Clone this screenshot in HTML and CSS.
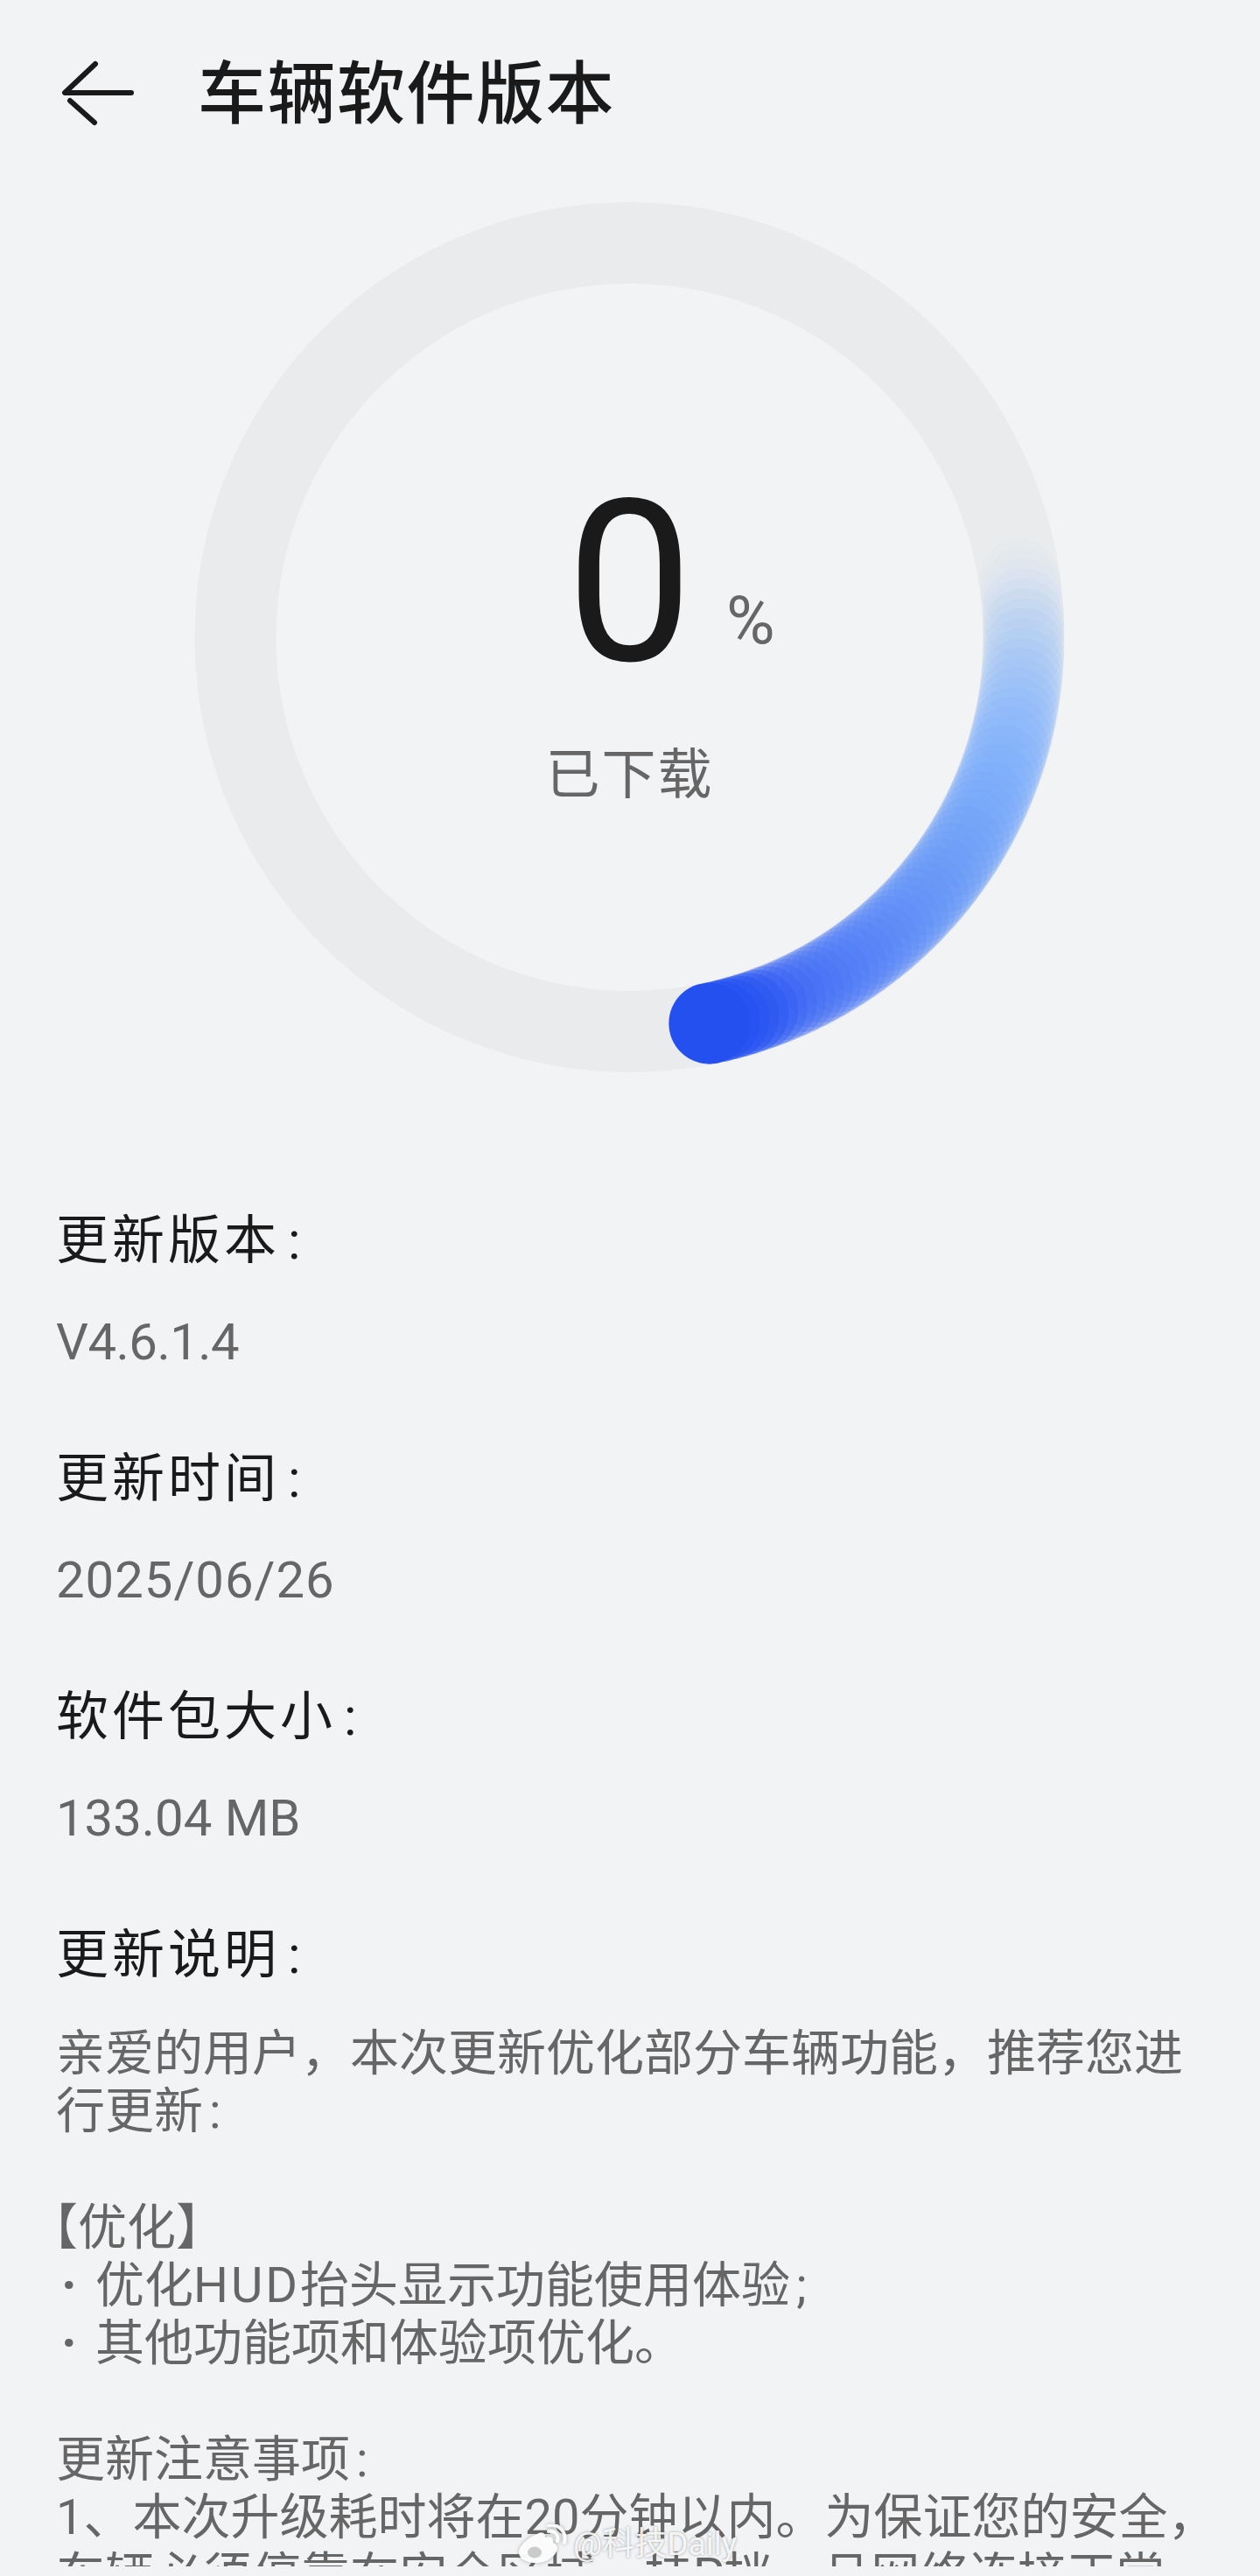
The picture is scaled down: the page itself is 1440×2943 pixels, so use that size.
FILE: index.html
```html
<!DOCTYPE html>
<html lang="zh-CN">
<head>
	<meta charset="UTF-8">
	<title>车辆软件版本</title>
	<link rel="stylesheet" href="styles.css">
</head>
<body>
	<div class="page">
		<div class="header">
			<svg class="back" viewBox="0 0 84 76" fill="none">
				<path class="back-line" d="M39 5 L4 38 H80"/>
				<path class="back-line" d="M10 47 L38 72"/>
			</svg>
			<div class="title">车辆软件版本</div>
		</div>

		<div class="dial">
			<svg class="ring" id="ring" viewBox="0 0 994 994">
				<circle class="track" cx="497" cy="497" r="450.5"/>
			</svg>
			<div class="dial-text">
				<div class="count">
					<span></span>
					<span class="num">0</span>
					<span class="unit">%</span>
				</div>
				<div class="status">已下载</div>
			</div>
		</div>

		<div class="info">
			<div class="item">
				<div class="label">更新版本<span class="colon">:</span></div>
				<div class="value version">V4.6.1.4</div>
			</div>
			<div class="item">
				<div class="label">更新时间<span class="colon">:</span></div>
				<div class="value date">2025/06/26</div>
			</div>
			<div class="item">
				<div class="label">软件包大小<span class="colon">:</span></div>
				<div class="value">133.04 MB</div>
			</div>
			<div class="item">
				<div class="label">更新说明<span class="colon">:</span></div>
				<div class="notes">
					<p>亲爱的用户，本次更新优化部分车辆功能，推荐您进行更新<span class="colon-sm">:</span></p>
					<p><span class="bracket">【</span>优化】<br>
					<span class="dot">·</span>优化<span class="latin">HUD</span>抬头显示功能使用体验<span class="colon-sm">;</span><br>
					<span class="dot">·</span>其他功能项和体验项优化。</p>
					<p>更新注意事项<span class="colon-sm">:</span><br>
					1、本次升级耗时将在20分钟以内。为保证您的安全，车辆必须停靠在安全区域，挂P挡，且网络连接正常。</p>
				</div>
			</div>
		</div>
	</div>

	<div class="mark">
		<svg class="mark-logo" viewBox="0 0 56 46" fill="none">
			<path class="mark-body" d="M22 11 C27 8 32 10 31 15 C37 13 41 16 40 21 C45 23 46 27 44 31 C40 40 28 45 17 44 C7 43 1 38 1 32 C1 24 13 14 22 11 Z"/>
			<ellipse class="mark-eye" cx="19" cy="32" rx="8" ry="6.5"/>
			<path class="mark-arc" d="M35 8 C42 7 47 12 45 19"/>
			<path class="mark-arc" d="M35 1 C47 -1 56 9 53 21"/>
		</svg>
		<span>@科技Daily</span>
	</div>

	<script src="script.js"></script>
</body>
</html>
```

FILE: styles.css
```css
*{
	margin:0;
	padding:0;
	box-sizing:border-box;
}
html,body{
	height:2943px;
	overflow:hidden;
	background:#f1f3f5;
}
body{
	position:relative;
	font-family:Roboto,"Noto Sans CJK SC",sans-serif;
}
.page{
	height:2932px;
	overflow:hidden;
}

/* top bar */
.header{
	height:212px;
	display:flex;
	align-items:center;
	padding-left:70px;
}
.back{
	width:84px;
	height:76px;
	margin-right:72px;
}
.back-line{
	stroke:#1a1a1a;
	stroke-width:6;
	stroke-linecap:round;
	stroke-linejoin:round;
}
.title{
	padding-top:6px;
	font-size:78px;
	font-weight:500;
	line-height:90px;
	letter-spacing:1.5px;
	color:#1a1a1a;
}

/* progress ring */
.dial{
	width:994px;
	height:994px;
	margin:19px auto 0;
	display:grid;
	transform:translateX(-.5px);
}
.ring,.dial-text{
	grid-area:1/1;
}
.ring{
	width:994px;
	height:994px;
}
.track{
	fill:none;
	stroke:#e9ebed;
	stroke-width:93;
}
.dial-text{
	padding-top:310px;
	text-align:center;
}
.count{
	display:grid;
	grid-template-columns:1fr auto 1fr;
	align-items:end;
	height:250px;
}
.num{
	font-size:258px;
	line-height:250px;
	color:#1a1a1a;
}
.unit{
	text-align:left;
	font-size:76px;
	line-height:80px;
	color:#666;
	margin:0 0 42px 38px;
}
.status{
	margin-top:60px;
	font-size:62px;
	line-height:70px;
	letter-spacing:2px;
	color:#666;
}

/* info list */
.info{
	margin-top:160px;
	padding:0 44px 0 64px;
}
.item{
	margin-bottom:91px;
}
.label{
	font-size:60px;
	line-height:66px;
	letter-spacing:4px;
	color:#1a1a1a;
}
.colon{
	margin-left:9px;
}
.value{
	margin-top:49px;
	font-size:58px;
	line-height:66px;
	color:#666;
}
.version{
	letter-spacing:-.5px;
}
.date{
	letter-spacing:1px;
}
.notes{
	margin-top:46px;
	font-size:56px;
	line-height:66.3px;
	color:#666;
}
.notes p{
	margin-bottom:66.3px;
}
.colon-sm{
	margin-left:7px;
}
.bracket{
	margin-left:-31px;
}
.latin{
	letter-spacing:3px;
}
.dot{
	display:inline-block;
	width:45px;
	padding-left:4px;
	font-size:84px;
	line-height:0;
	vertical-align:-10px;
}

/* watermark */
.mark{
	position:absolute;
	left:592px;
	top:2884px;
	display:flex;
	align-items:center;
	gap:7px;
	font-size:37px;
	line-height:44px;
	color:rgba(255,255,255,.9);
	text-shadow:0 0 3px rgba(90,90,90,.6);
}
.mark-logo{
	width:56px;
	height:46px;
	filter:drop-shadow(0 0 2px rgba(90,90,90,.5));
}
.mark-body{
	fill:rgba(255,255,255,.95);
}
.mark-eye{
	fill:#c9cbcd;
}
.mark-arc{
	stroke:rgba(255,255,255,.95);
	stroke-width:4;
	stroke-linecap:round;
}
```

FILE: script.js
```js
// 进度环：一串半透明圆点叠起来，越靠近头部越实
var ring=document.getElementById("ring");
var stops=[
	[0,[165,200,248]],
	[.18,[150,190,250]],
	[.32,[128,176,251]],
	[.52,[104,154,250]],
	[.7,[85,133,248]],
	[.84,[65,108,246]],
	[.92,[46,90,243]],
	[1,[36,80,240]]
];
var count=60;

function colorAt(t){
	for(var s=0;s<stops.length-2;s++){
		if(t<stops[s+1][0]) break;
	}
	var f=(t-stops[s][0])/(stops[s+1][0]-stops[s][0]);
	return [0,1,2].map(function(k){
		return Math.round(stops[s][1][k]+(stops[s+1][1][k]-stops[s][1][k])*f);
	});
}

for(var i=0;i<=count;i++){
	var t=i/count;
	var deg=(-8.4+86.7*t)*Math.PI/180;
	var alpha=Math.min(.3,.02+1.1*t);
	if(t>.88) alpha=.3+(t-.88)/.12*.5;
	if(i==count) alpha=1;
	var dot=document.createElementNS("http://www.w3.org/2000/svg","circle");
	dot.setAttribute("cx",497+450.5*Math.cos(deg));
	dot.setAttribute("cy",497+450.5*Math.sin(deg));
	dot.setAttribute("r",46.5);
	dot.setAttribute("fill","rgb("+colorAt(t).join(",")+")");
	dot.setAttribute("fill-opacity",alpha);
	ring.appendChild(dot);
}
```
